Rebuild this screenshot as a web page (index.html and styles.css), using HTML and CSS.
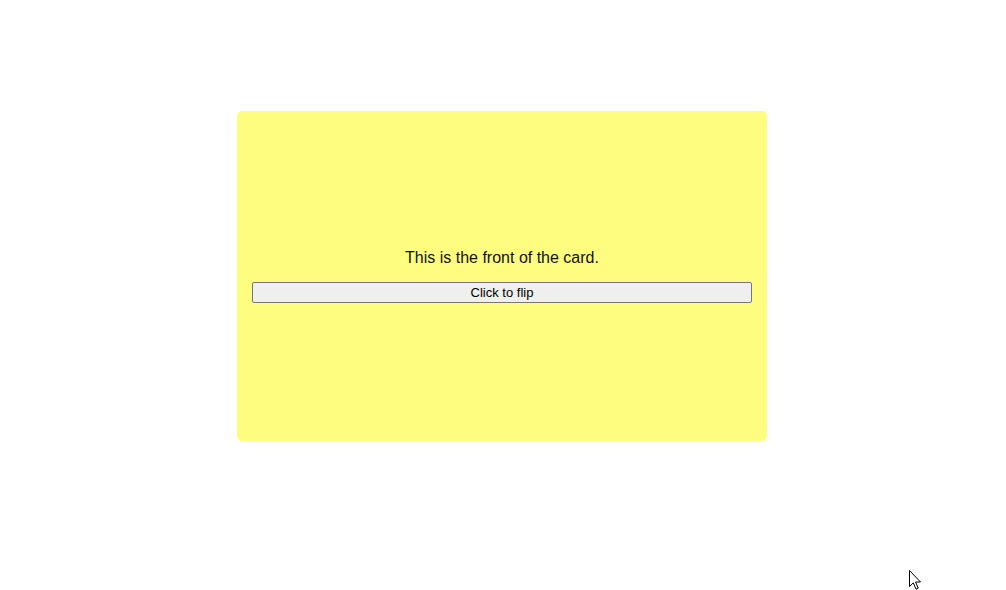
FILE: index.html
```html
<!DOCTYPE html>
<html>
<head>
<meta charset="utf-8">
<link rel="stylesheet" href="styles.css">
</head>
<body>
<div class="stage">
  <div class="card">
    <p class="card-text">This is the front of the card.</p>
    <button class="flip-btn">Click to flip</button>
  </div>
</div>
<svg class="cursor" width="13" height="21" viewBox="0 0 13 21">
  <path d="M0.5 0.5 L0.5 16.5 L4.3 12.8 L7 19.2 L9.2 18.2 L6.6 12 L11.5 12 Z" fill="#fff" stroke="#000" stroke-width="1" stroke-linejoin="miter"/>
</svg>
</body>
</html>
```
FILE: styles.css
```css
html, body {
  margin: 0;
  padding: 0;
  background: #ffffff;
  width: 1006px;
  height: 590px;
  overflow: hidden;
  font-family: "Liberation Sans", Arial, sans-serif;
}
.stage {
  padding-top: 111px;
  padding-left: 237px;
}
.card {
  width: 530px;
  height: 330px;
  box-sizing: border-box;
  padding: 0 15px;
  background: #fffd80;
  border-radius: 5px;
  display: flex;
  flex-direction: column;
  justify-content: center;
  align-items: stretch;
}
.card-text {
  margin: 0 0 15px 0;
  text-align: center;
  font-size: 16px;
  line-height: 18px;
  color: #111;
}
.flip-btn {
  height: 21px;
  font-family: "Liberation Sans", Arial, sans-serif;
  font-size: 13px;
  color: #000;
  background: #efefef;
  border: 1px solid #767676;
  border-radius: 2px;
  padding: 0;
}
.cursor {
  position: absolute;
  left: 909px;
  top: 570px;
}
```
